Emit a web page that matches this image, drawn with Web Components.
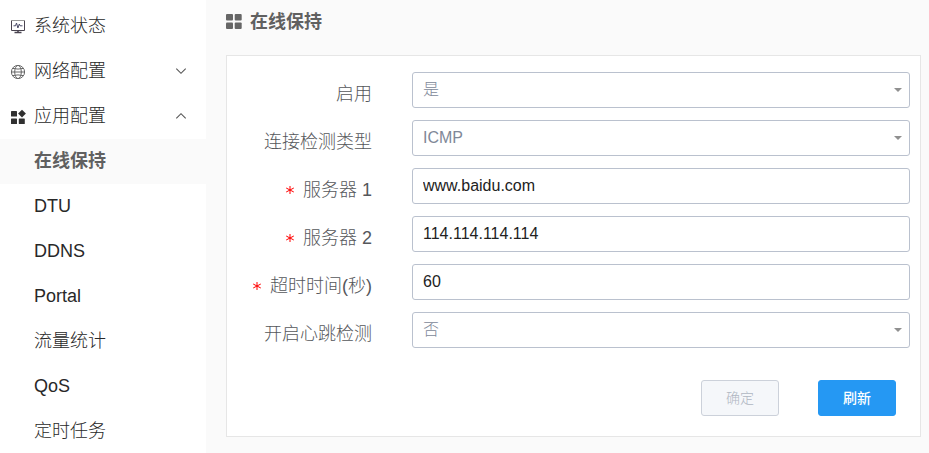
<!DOCTYPE html>
<html lang="zh-CN">
<head>
<meta charset="utf-8">
<meta name="viewport" content="width=device-width, initial-scale=1">
<title>在线保持</title>
<style>
  html, body { height: 100%; }
  body {
    margin: 0;
    background: #fafafa;
    color: #282828;
    font: 300 18px/24px "Liberation Sans", "Noto Sans CJK SC", sans-serif;
  }
</style>
</head>
<body>
<app-shell>
  <side-nav slot="nav">
    <nav-item icon="monitor">系统状态</nav-item>
    <nav-item icon="globe" arrow="down">网络配置</nav-item>
    <nav-item icon="apps" arrow="up">应用配置</nav-item>
    <nav-item active>在线保持</nav-item>
    <nav-item>DTU</nav-item>
    <nav-item>DDNS</nav-item>
    <nav-item>Portal</nav-item>
    <nav-item>流量统计</nav-item>
    <nav-item>QoS</nav-item>
    <nav-item>定时任务</nav-item>
  </side-nav>
  <page-title>在线保持</page-title>
  <form-panel>
    <form-field kind="select" value="是">启用</form-field>
    <form-field kind="select" value="ICMP">连接检测类型</form-field>
    <form-field required value="www.baidu.com">服务器 1</form-field>
    <form-field required value="114.114.114.114">服务器 2</form-field>
    <form-field required value="60">超时时间(秒)</form-field>
    <form-field kind="select" value="否">开启心跳检测</form-field>
    <action-button slot="actions" disabled>确定</action-button>
    <action-button slot="actions" primary>刷新</action-button>
  </form-panel>
</app-shell>
<script>
const icons = {
  monitor: `<svg width="16" height="16" viewBox="0 0 16 16" fill="none" stroke="#4a4450" stroke-width="1">
    <path d="M1.500 2v9.500h13V2"/><path d="M1 1.500h14" stroke="#999"/>
    <path d="M3.500 6.800h2l1-2.800 1.400 5 1.400-4 .8 1.800h2.400" stroke="#4b4b68"/>
    <path d="M8 12v2M4.500 13.500h7" stroke-width="1.600"/></svg>`,
  globe: `<svg width="16" height="16" viewBox="0 0 16 16" fill="none" stroke="#666" stroke-width="1">
    <circle cx="8" cy="8" r="6.600"/><ellipse cx="8" cy="8" rx="3.300" ry="6.600"/>
    <path d="M1.400 8h13.200M2.800 4.400q5.200 1.400 10.400 0M2.800 11.600q5.200-1.400 10.400 0"/></svg>`,
  apps: `<svg width="16" height="16" viewBox="0 0 16 16" fill="#303030">
    <rect x="1" y="2" width="6" height="5.600" rx=".6"/><rect x="1" y="9.400" width="6" height="5.600" rx=".6"/>
    <rect x="8.800" y="9.400" width="6" height="5.600" rx=".6"/><path d="M12 .7l3.900 3.900L12 8.500 8.100 4.600z"/></svg>`,
  down: `<svg width="12" height="12" viewBox="0 0 12 12" fill="none" stroke="#555" stroke-width="1.100"><path d="M1.300 3.700L6 8.300l4.700-4.600"/></svg>`,
  up: `<svg width="12" height="12" viewBox="0 0 12 12" fill="none" stroke="#555" stroke-width="1.100"><path d="M1.300 8.300L6 3.700l4.700 4.600"/></svg>`
};

class BaseElement extends HTMLElement {
  constructor() {
    super();
    this.attachShadow({ mode: "open" });
  }
  connectedCallback() {
    this.shadowRoot.innerHTML = this.render();
  }
}

customElements.define("app-shell", class extends BaseElement {
  render() {
    return `<style>
      :host { display: flex; min-height: 100%; }
      aside { flex: none; width: 206px; background: #fff; }
      main { flex: 1; min-width: 0; padding: 0 8px 16px 20px; }
    </style>
    <aside><slot name="nav"></slot></aside>
    <main><slot></slot></main>`;
  }
});

customElements.define("side-nav", class extends BaseElement {
  render() {
    return `<style>
      :host { display: block; }
      nav { display: flex; flex-direction: column; padding-top: 4px; }
    </style>
    <nav aria-label="主菜单"><slot></slot></nav>`;
  }
});

customElements.define("nav-item", class extends BaseElement {
  render() {
    const icon = icons[this.getAttribute("icon")] || "";
    const arrow = icons[this.getAttribute("arrow")] || "";
    return `<style>
      :host { display: block; }
      :host([active]) { background: #fafafa; color: #606060; font-weight: 700; }
      a { display: grid; grid-template-columns: 16px 1fr 12px; column-gap: 8px; align-items: center;
          box-sizing: border-box; height: 45px; padding: 0 19px 2px 10px; color: inherit; text-decoration: none; }
      svg { display: block; }
      .icon { padding-top: 2px; }
    </style>
    <a href="#"${this.hasAttribute("active") ? ' aria-current="page"' : ""}>
      <span class="icon">${icon}</span><span><slot></slot></span><span>${arrow}</span>
    </a>`;
  }
});

customElements.define("page-title", class extends BaseElement {
  render() {
    return `<style>
      :host { display: block; }
      h1 { display: flex; align-items: center; gap: 8px; height: 43px; margin: 0 0 12px;
           color: #606060; font-size: 18px; line-height: 24px; font-weight: 700; }
    </style>
    <h1><svg width="16" height="16" viewBox="0 0 16 16" fill="#666">
      <rect x="0" y="0" width="7" height="6.500" rx="1"/><rect x="8.700" y="0" width="7" height="6.500" rx="1"/>
      <rect x="0" y="8.500" width="7" height="6.500" rx="1"/><rect x="8.700" y="8.500" width="7" height="6.500" rx="1"/>
    </svg><slot></slot></h1>`;
  }
});

customElements.define("form-panel", class extends BaseElement {
  render() {
    return `<style>
      :host { display: block; background: #fff; border: 1px solid #e6e6e6; }
      form { padding: 16px 10px 20px; }
      .fields { display: grid; gap: 12px; }
      .actions { display: flex; justify-content: flex-end; gap: 39px; padding: 32px 14px 0 0; }
    </style>
    <form onsubmit="return false">
      <div class="fields"><slot></slot></div>
      <div class="actions"><slot name="actions"></slot></div>
    </form>`;
  }
});

customElements.define("form-field", class extends BaseElement {
  render() {
    const value = this.getAttribute("value");
    const required = this.hasAttribute("required");
    const isSelect = this.getAttribute("kind") === "select";
    const control = isSelect
      ? `<select id="control"><option>${value}</option></select>`
      : `<input id="control" type="text" value="${value}"${required ? " required" : ""}>`;
    return `<style>
      :host { display: grid; grid-template-columns: 135px 1fr; column-gap: 40px; color: #55575b; }
      label { display: flex; justify-content: flex-end; align-items: center; gap: 8px;
              height: 36px; padding-top: 8px; box-sizing: border-box; white-space: nowrap; }
      svg { display: block; }
      .box { position: relative; }
      input, select { appearance: none; display: block; box-sizing: border-box; width: 100%; height: 36px;
        margin: 0; padding: 0 10px; border: 1px solid #bac1ce; border-radius: 3px; background: #fff;
        color: #222; font: inherit; font-size: 16px; line-height: 24px; outline: 0; }
      select { color: #808898; }
      .select::after { content: ""; position: absolute; right: 8px; top: 16px; width: 8px; height: 4px;
        background: #909090; clip-path: polygon(0 0, 100% 0, 50% 100%); pointer-events: none; }
    </style>
    <label for="control">${required ? '<svg aria-hidden="true" width="10" height="10" viewBox="0 0 10 10" stroke="#f00" stroke-width="1"><path d="M5 1v8M1.200 3l7.600 4M1.200 7l7.600-4"/></svg>' : ""}<span><slot></slot></span></label>
    <div class="box${isSelect ? " select" : ""}">${control}</div>`;
  }
});

customElements.define("action-button", class extends BaseElement {
  render() {
    return `<style>
      :host { display: block; }
      button { display: block; box-sizing: border-box; width: 78px; height: 36px; padding: 0;
        border: 1px solid #ccd1da; border-radius: 3px; background: #f5f7fa; color: #b0b6c2;
        font: inherit; font-size: 14px; line-height: 20px; }
      :host([primary]) button { border-color: #2598f3; background: #2598f3; color: #fff; font-weight: 500; }
    </style>
    <button type="button"${this.hasAttribute("disabled") ? " disabled" : ""}><slot></slot></button>`;
  }
});
</script>
</body>
</html>
